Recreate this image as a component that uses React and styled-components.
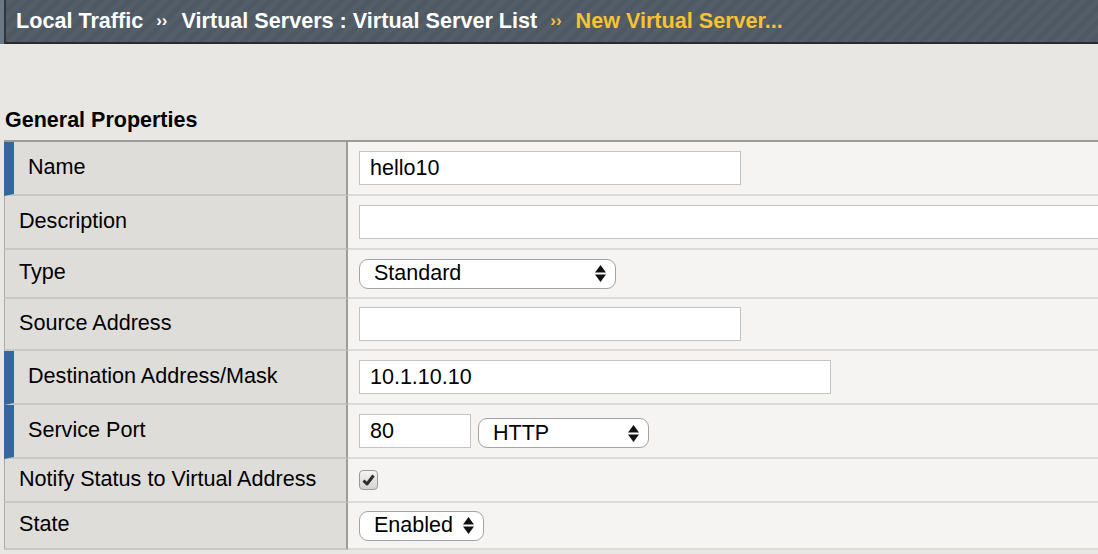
import React from "react";
import styled, { createGlobalStyle, css } from "styled-components";

const GlobalStyle = createGlobalStyle`
  html, body {
    margin: 0;
    padding: 0;
    overflow: hidden;
    background: #e9e7e3;
  }
  body {
    font-family: "Liberation Sans", Arial, Helvetica, sans-serif;
    color: #000;
  }
`;

const Page = styled.div`
  width: 1098px;
  height: 554px;
  overflow: hidden;
  background: #e9e7e3;
`;

const Header = styled.div`
  display: flex;
  align-items: center;
  height: 42px;
  margin-left: 4px;
  padding-left: 10px;
  border-left: 2px solid #30363c;
  border-bottom: 2px solid #2b2b2b;
  box-shadow: -4px 0 0 #6b7886;
  background: repeating-linear-gradient(135deg, #545e68 0 5px, #4f5963 5px 10px);
  font-size: 21.6px;
  font-weight: bold;
  white-space: nowrap;
`;

const Crumb = styled.span`
  color: ${(p) => (p.$current ? "#f7c32e" : "#fff")};
`;

const Sep = styled.span`
  margin: 0 14px 0 13px;
  font-size: 17px;
  color: ${(p) => (p.$current ? "#f7c32e" : "#fff")};
`;

const TitleArea = styled.div`
  display: flex;
  align-items: flex-end;
  box-sizing: border-box;
  height: 96px;
  padding: 0 0 8px 5px;
  font-size: 21.5px;
  line-height: 24px;
  font-weight: bold;
`;

const Table = styled.div`
  margin-left: 4px;
  border-top: 2px solid #9d9b98;
`;

const Row = styled.div`
  display: grid;
  grid-template-columns: 344px 1fr;
  height: ${(p) => p.$h}px;
`;

const Label = styled.div`
  display: flex;
  align-items: center;
  box-sizing: border-box;
  padding: 0 0 3px 14px;
  background: #dfddd9;
  border-left: 1px solid #aeaca9;
  border-right: 2px solid #9e9c99;
  border-bottom: 2px solid #c9c7c3;
  font-size: 21.6px;
  white-space: nowrap;
  ${(p) =>
    p.$required &&
    css`
      border-left: 10px solid #34689a;
    `}
`;

const Value = styled.div`
  display: flex;
  align-items: center;
  gap: 8px;
  box-sizing: border-box;
  padding-left: 11px;
  background: #f5f4f2;
  border-bottom: 2px solid #dddbd7;
  overflow: hidden;
`;

const Group = styled.div`
  display: flex;
  align-items: flex-end;
  gap: 7px;
`;

const TextInput = styled.input`
  box-sizing: border-box;
  flex: none;
  width: ${(p) => p.$w}px;
  height: 34px;
  padding: 0 10px;
  border: 1px solid #c3c3c3;
  border-radius: 0;
  background: #fff;
  font-family: "Liberation Sans", Arial, Helvetica, sans-serif;
  font-size: 21.5px;
  color: #000;
  outline: none;
`;

const SelectBox = styled.div`
  display: flex;
  align-items: center;
  justify-content: space-between;
  box-sizing: border-box;
  flex: none;
  width: ${(p) => p.$w}px;
  height: 30px;
  padding: 0 9px 0 14px;
  background: #fff;
  border: 1.5px solid #a3a3a3;
  border-radius: 9px;
  font-size: 21.5px;
`;

const CheckBox = styled.span`
  display: flex;
  align-items: center;
  justify-content: center;
  box-sizing: border-box;
  width: 19px;
  height: 20px;
  border: 1px solid #9a9a9a;
  border-radius: 4px;
  background: linear-gradient(#f3f3f3, #d4d4d4);
`;

const Arrows = () => (
  <svg width="11" height="17" viewBox="0 0 11 17">
    <path d="M0 7.5 L5.5 0 L11 7.5 Z" fill="#111" />
    <path d="M0 9.5 L11 9.5 L5.5 17 Z" fill="#111" />
  </svg>
);

const Select = ({ w, children }) => (
  <SelectBox $w={w}>
    <span>{children}</span>
    <Arrows />
  </SelectBox>
);

export default function App() {
  return (
    <Page>
      <GlobalStyle />
      <Header>
        <Crumb>Local Traffic</Crumb>
        <Sep>››</Sep>
        <Crumb>Virtual Servers : Virtual Server List</Crumb>
        <Sep $current>››</Sep>
        <Crumb $current>New Virtual Server...</Crumb>
      </Header>

      <TitleArea>General Properties</TitleArea>

      <Table>
        <Row $h={54}>
          <Label $required>Name</Label>
          <Value>
            <TextInput $w={382} value="hello10" readOnly />
          </Value>
        </Row>
        <Row $h={54}>
          <Label>Description</Label>
          <Value>
            <TextInput $w={800} value="" readOnly />
          </Value>
        </Row>
        <Row $h={49}>
          <Label>Type</Label>
          <Value>
            <Select w={257}>Standard</Select>
          </Value>
        </Row>
        <Row $h={52}>
          <Label>Source Address</Label>
          <Value>
            <TextInput $w={382} value="" readOnly />
          </Value>
        </Row>
        <Row $h={54}>
          <Label $required>Destination Address/Mask</Label>
          <Value>
            <TextInput $w={472} value="10.1.10.10" readOnly />
          </Value>
        </Row>
        <Row $h={54}>
          <Label $required>Service Port</Label>
          <Value>
            <Group>
              <TextInput $w={112} value="80" readOnly />
              <Select w={171}>HTTP</Select>
            </Group>
          </Value>
        </Row>
        <Row $h={44}>
          <Label>Notify Status to Virtual Address</Label>
          <Value>
            <CheckBox>
              <svg width="13" height="12" viewBox="0 0 13 12">
                <path
                  d="M1.5 6.5 L5 10 L11.5 1.5"
                  fill="none"
                  stroke="#2e2e2e"
                  strokeWidth="3"
                  strokeLinejoin="round"
                />
              </svg>
            </CheckBox>
          </Value>
        </Row>
        <Row $h={47}>
          <Label>State</Label>
          <Value>
            <Select w={125}>Enabled</Select>
          </Value>
        </Row>
      </Table>
    </Page>
  );
}
